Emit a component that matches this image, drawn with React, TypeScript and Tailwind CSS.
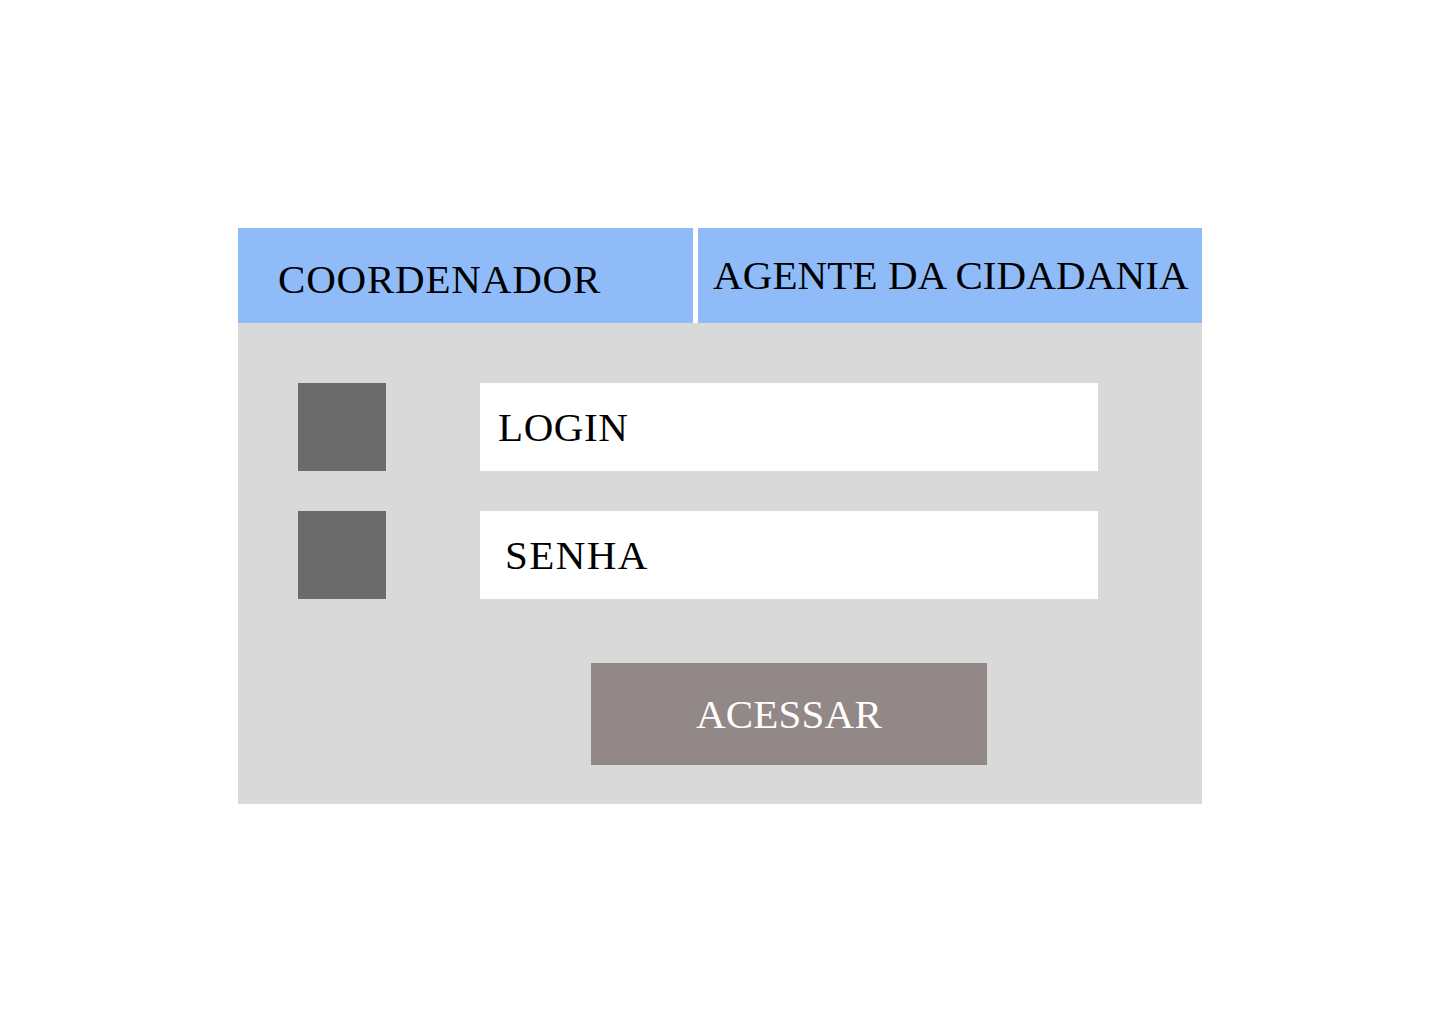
const serif = "font-['Liberation_Serif',_'Times_New_Roman',_serif]";

function Field({
  label,
  pad,
  track,
}: {
  label: string;
  pad: string;
  track: string;
}) {
  return (
    <div className="flex items-center">
      <div className="w-[88px] h-[88px] bg-[#6b6b6b]" />
      <div
        className={`ml-[94px] w-[618px] h-[88px] bg-white flex items-center ${pad}`}
      >
        <span className={`text-[41px] leading-none text-black ${track}`}>
          {label}
        </span>
      </div>
    </div>
  );
}

export default function App() {
  return (
    <div className={`min-h-[1024px] w-full bg-white ${serif}`}>
      <div className="pt-[228px] mx-auto w-[964px]">
        <div className="flex h-[95px] gap-[5px]">
          <div className="w-[455px] bg-[#8fbcf8] flex items-center pl-[40px] pt-[7px]">
            <span className="text-[41px] leading-none text-black tracking-[0.8px]">
              COORDENADOR
            </span>
          </div>
          <div className="flex-1 bg-[#8fbcf8] flex items-center pl-[15px]">
            <span className="text-[41px] leading-none text-black tracking-[0.1px]">
              AGENTE DA CIDADANIA
            </span>
          </div>
        </div>
        <div className="bg-[#d9d9d9] h-[481px] pt-[60px] pl-[60px] flex flex-col">
          <Field label="LOGIN" pad="pl-[18px]" track="tracking-[0.6px]" />
          <div className="h-[40px]" />
          <Field label="SENHA" pad="pl-[25px]" track="tracking-[1.4px]" />
          <div className="pl-[293px] pt-[64px]">
            <button className="w-[396px] h-[102px] bg-[#918887] flex items-center justify-center">
              <span className="text-[41px] leading-none text-white tracking-[0.2px]">
                ACESSAR
              </span>
            </button>
          </div>
        </div>
      </div>
    </div>
  );
}
